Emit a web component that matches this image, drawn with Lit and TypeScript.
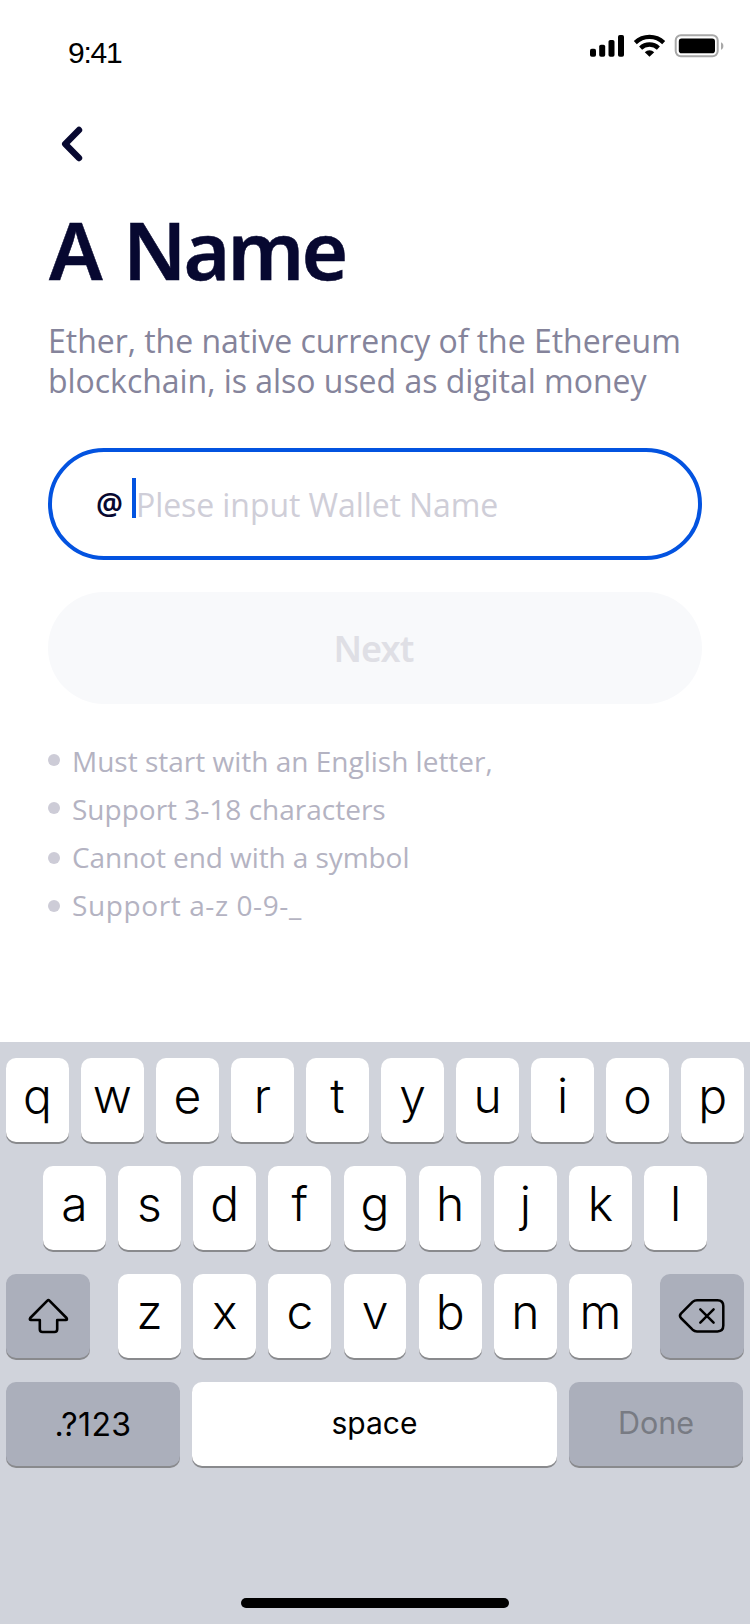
import { LitElement, html, css } from "lit";
import { customElement } from "lit/decorators.js";

@customElement("status-bar")
class StatusBar extends LitElement {
  static styles = css`
    :host {
      display: flex;
      justify-content: space-between;
      box-sizing: border-box;
      height: 88px;
      padding: 33px 26px 0 68px;
    }
    .time {
      font: 400 30px/40px "Liberation Sans", Arial, sans-serif;
      letter-spacing: -1.2px;
      color: #000;
    }
    .icons {
      display: block;
      width: 136px;
      height: 26px;
    }
  `;

  render() {
    return html`
      <span class="time">9:41</span>
      <svg class="icons" viewBox="588 33 136 26">
        <rect x="590" y="48.7" width="6" height="8" rx="1.8" />
        <rect x="599.2" y="44.7" width="6" height="12" rx="1.8" />
        <rect x="608.5" y="40" width="6" height="16.7" rx="1.8" />
        <rect x="618" y="35" width="6" height="21.7" rx="1.8" />
        <g fill="none" stroke="#000" stroke-width="4.3">
          <path d="M635.3 42.6a20.4 20.4 0 0 1 28.4 0" />
          <path d="M640.6 48.1a12.8 12.8 0 0 1 17.8 0" />
        </g>
        <path d="M644.8 52.2a6.8 6.8 0 0 1 9.4 0l-4.7 4.6z" />
        <rect x="675.7" y="35.3" width="42" height="20.9" rx="5.2" fill="none" stroke="#a8a8a8" stroke-width="2" />
        <rect x="678.8" y="38.6" width="36.2" height="14.6" rx="2.8" />
        <path d="M721 42.2c3.2 1.4 3.2 6 0 7.6z" fill="#a8a8a8" />
      </svg>
    `;
  }
}

@customElement("name-form")
class NameForm extends LitElement {
  static styles = css`
    :host {
      display: flex;
      flex-direction: column;
      padding: 0 48px;
      font-family: "Open Sans", "Noto Sans", sans-serif;
      color: #070830;
    }
    .back {
      display: block;
      width: 26px;
      height: 38px;
      margin: 37px 0 0 12px;
    }
    .title {
      margin: 38px 0 0 1px;
      font: 600 80px/96px "Noto Sans", sans-serif;
      letter-spacing: -2.8px;
      word-spacing: 5px;
      white-space: nowrap;
      -webkit-text-stroke: 0.5px #070830;
    }
    .intro {
      margin: 24px 0 0;
      font-size: 32px;
      line-height: 40px;
      letter-spacing: -0.03px;
      color: #85849b;
      white-space: nowrap;
    }
    .field {
      display: flex;
      align-items: center;
      box-sizing: border-box;
      height: 112px;
      margin-top: 47px;
      padding-left: 44px;
      border: 4px solid #0353e0;
      border-radius: 56px;
    }
    .at {
      width: 36px;
      font: 600 30px/40px "Noto Sans", sans-serif;
    }
    .caret {
      width: 4px;
      height: 40px;
      margin-bottom: 12px;
      background: #0353e0;
    }
    .hint {
      padding-top: 2px;
      font-size: 32px;
      line-height: 40px;
      letter-spacing: -0.08px;
      color: #cfced8;
      white-space: nowrap;
    }
    .next {
      box-sizing: border-box;
      height: 112px;
      margin-top: 32px;
      padding: 2px 3px 0 0;
      border-radius: 56px;
      background: #f8f9fb;
      font: 600 36px/110px "Noto Sans", sans-serif;
      letter-spacing: -0.9px;
      text-align: center;
      color: #dfdfe5;
    }
    .rules {
      margin: 33px 0 0;
      padding: 0;
      list-style: none;
    }
    .rule {
      display: flex;
      align-items: center;
      gap: 12px;
      height: 48px;
      font-size: 28px;
      line-height: 48px;
      color: #b4b3c2;
    }
    .rule:nth-child(3) {
      letter-spacing: -0.08px;
    }
    .rule:last-child {
      letter-spacing: 0.6px;
    }
    .rule::before {
      content: "";
      width: 12px;
      height: 12px;
      margin-bottom: 2px;
      border-radius: 50%;
      background: #cdccd7;
    }
    .rule:nth-child(n + 3)::before {
      margin: 2px 0 0;
    }
  `;

  private rules = [
    "Must start with an English letter,",
    "Support 3-18 characters",
    "Cannot end with a symbol",
    "Support a-z 0-9-_",
  ];

  render() {
    return html`
      <svg class="back" viewBox="60 125 26 38">
        <path d="M79 130 65.2 144 79 158" fill="none" stroke="#070830" stroke-width="6.4"
          stroke-linecap="round" stroke-linejoin="round" />
      </svg>
      <div class="title">A Name</div>
      <p class="intro">Ether, the native currency of the Ethereum<br />blockchain, is also used as digital money</p>
      <div class="field">
        <span class="at">@</span><span class="caret"></span>
        <span class="hint">Plese input Wallet Name</span>
      </div>
      <div class="next">Next</div>
      <ul class="rules">
        ${this.rules.map((r) => html`<li class="rule">${r}</li>`)}
      </ul>
    `;
  }
}

@customElement("soft-keyboard")
class SoftKeyboard extends LitElement {
  static styles = css`
    :host {
      display: flex;
      flex-direction: column;
      gap: 24px;
      box-sizing: border-box;
      height: 582px;
      padding: 16px 6px 0;
      background: #d0d3db;
      font-family: Inter, Roboto, sans-serif;
      color: #000;
    }
    .row {
      display: flex;
      justify-content: space-between;
      height: 84px;
    }
    .middle {
      padding: 0 37px;
    }
    .bottom {
      padding-right: 1px;
    }
    .letters {
      display: flex;
      gap: 12.5px;
    }
    .key {
      width: 62.7px;
      height: 84px;
      border-radius: 10px;
      background: #fff;
      box-shadow: 0 2px 0 #898a8d;
      font-size: 48px;
      font-weight: 350;
      line-height: 76px;
      text-align: center;
    }
    .dark {
      background: #abafbb;
    }
    .icon {
      width: 84px;
    }
    .icon svg {
      display: block;
      width: 84px;
      height: 84px;
    }
    .word {
      font-size: 30px;
      font-weight: 400;
      line-height: 82px;
    }
    .side {
      width: 174px;
    }
    .numbers {
      font-size: 32px;
      line-height: 86px;
      letter-spacing: 0.4px;
    }
    .space {
      width: 364.5px;
    }
    .done {
      font-size: 30.5px;
      color: #787b83;
    }
    .home {
      align-self: center;
      width: 268px;
      height: 10px;
      margin-top: 108px;
      border-radius: 5px;
      background: #000;
    }
  `;

  private keys(letters: string) {
    return [...letters].map((l) => html`<div class="key">${l}</div>`);
  }

  render() {
    return html`
      <div class="row">${this.keys("qwertyuiop")}</div>
      <div class="row middle">${this.keys("asdfghjkl")}</div>
      <div class="row">
        <div class="key dark icon">
          <svg viewBox="6 1274 84 84">
            <path d="M47.4 1300.7Q48.4 1299.7 49.4 1300.7L66.6 1318Q67.6 1319.9 65.8 1320H57.2V1329.2Q57.2 1332 54.4 1332H42.6Q39.8 1332 39.8 1329.2V1320H31Q29.2 1319.9 30.2 1318Z"
              fill="none" stroke="#000" stroke-width="2.6" stroke-linejoin="round" />
          </svg>
        </div>
        <div class="letters">${this.keys("zxcvbnm")}</div>
        <div class="key dark icon">
          <svg viewBox="660 1274 84 84">
            <path d="M697 1300.2H717.5Q723.3 1300.2 723.3 1306V1325.6Q723.3 1331.4 717.5 1331.4H697Q694.5 1331.4 692.6 1329.7L680.9 1318Q679 1315.8 680.9 1313.6L692.6 1301.9Q694.5 1300.2 697 1300.2ZM700.3 1309.3 713.6 1322.6M713.6 1309.3 700.3 1322.6"
              fill="none" stroke="#000" stroke-width="2.5" stroke-linecap="round" stroke-linejoin="round" />
          </svg>
        </div>
      </div>
      <div class="row bottom">
        <div class="key dark word side numbers">.?123</div>
        <div class="key word space">space</div>
        <div class="key dark word side done">Done</div>
      </div>
      <div class="home"></div>
    `;
  }
}

@customElement("app-root")
class AppRoot extends LitElement {
  static styles = css`
    :host {
      display: flex;
      flex-direction: column;
      width: 750px;
      height: 1624px;
      background: #fff;
    }
    .form {
      flex: 1;
    }
  `;

  render() {
    return html`
      <status-bar></status-bar>
      <name-form class="form"></name-form>
      <soft-keyboard></soft-keyboard>
    `;
  }
}
